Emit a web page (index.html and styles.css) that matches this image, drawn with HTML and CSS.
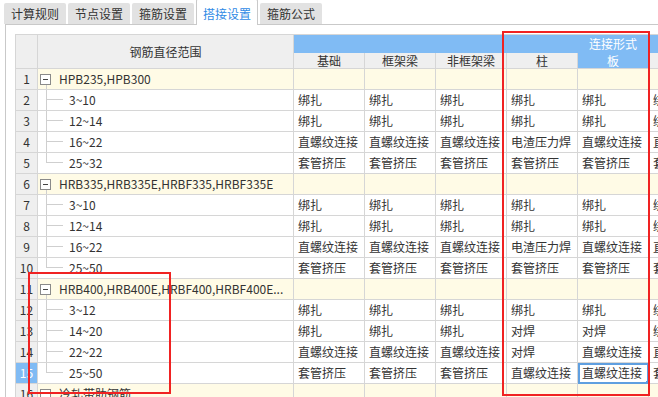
FILE: index.html
```html
<!DOCTYPE html>
<html lang="zh-CN">
  <head>
    <meta charset="UTF-8" />
    <title>搭接设置</title>
    <link rel="stylesheet" href="styles.css">
  </head>
  <body>
    <div class="tabs">
      <div class="tab">计算规则</div>
      <div class="tab">节点设置</div>
      <div class="tab">箍筋设置</div>
      <div class="tab active">搭接设置</div>
      <div class="tab">箍筋公式</div>
    </div>

    <div class="panel">
      <table class="grid">
        <colgroup>
          <col class="c-num" />
          <col class="c-range" />
          <col class="c-data" span="9" />
        </colgroup>
        <thead>
          <tr class="h1">
            <th rowspan="2" class="num"></th>
            <th rowspan="2">钢筋直径范围</th>
            <th colspan="9" class="group">连接形式</th>
          </tr>
          <tr class="h2">
            <th>基础</th>
            <th>框架梁</th>
            <th>非框架梁</th>
            <th>柱</th>
            <th class="sel">板</th>
            <th>墙水平筋</th>
            <th>墙垂直筋</th>
            <th>其它</th>
            <th>定尺长度</th>
          </tr>
        </thead>
        <tbody>
          <!-- HPB -->
          <tr class="grp">
            <td class="num">1</td>
            <td class="range"><div class="node top"><span class="toggle"><svg width="11" height="11" viewBox="0 0 11 11"><rect x="0.5" y="0.5" width="10" height="10" fill="#fff" stroke="#8a8a8a"/><path d="M3 5.5h5" stroke="#444"/></svg></span>HPB235,HPB300</div></td>
            <td></td><td></td><td></td><td></td><td></td><td></td><td></td><td></td><td></td>
          </tr>
          <tr>
            <td class="num">2</td>
            <td class="range"><div class="node"><span class="elbow"></span>3~10</div></td>
            <td>绑扎</td><td>绑扎</td><td>绑扎</td><td>绑扎</td><td>绑扎</td><td>绑扎</td><td>绑扎</td><td>绑扎</td><td>绑扎</td>
          </tr>
          <tr>
            <td class="num">3</td>
            <td class="range"><div class="node"><span class="elbow"></span>12~14</div></td>
            <td>绑扎</td><td>绑扎</td><td>绑扎</td><td>绑扎</td><td>绑扎</td><td>绑扎</td><td>绑扎</td><td>绑扎</td><td>绑扎</td>
          </tr>
          <tr>
            <td class="num">4</td>
            <td class="range"><div class="node"><span class="elbow"></span>16~22</div></td>
            <td>直螺纹连接</td><td>直螺纹连接</td><td>直螺纹连接</td><td>电渣压力焊</td><td>直螺纹连接</td><td>直螺纹连接</td><td>直螺纹连接</td><td>直螺纹连接</td><td>直螺纹连接</td>
          </tr>
          <tr>
            <td class="num">5</td>
            <td class="range"><div class="node"><span class="elbow last"></span>25~32</div></td>
            <td>套管挤压</td><td>套管挤压</td><td>套管挤压</td><td>套管挤压</td><td>套管挤压</td><td>套管挤压</td><td>套管挤压</td><td>套管挤压</td><td>套管挤压</td>
          </tr>

          <!-- HRB335 -->
          <tr class="grp">
            <td class="num">6</td>
            <td class="range"><div class="node top"><span class="toggle"><svg width="11" height="11" viewBox="0 0 11 11"><rect x="0.5" y="0.5" width="10" height="10" fill="#fff" stroke="#8a8a8a"/><path d="M3 5.5h5" stroke="#444"/></svg></span>HRB335,HRB335E,HRBF335,HRBF335E</div></td>
            <td></td><td></td><td></td><td></td><td></td><td></td><td></td><td></td><td></td>
          </tr>
          <tr>
            <td class="num">7</td>
            <td class="range"><div class="node"><span class="elbow"></span>3~10</div></td>
            <td>绑扎</td><td>绑扎</td><td>绑扎</td><td>绑扎</td><td>绑扎</td><td>绑扎</td><td>绑扎</td><td>绑扎</td><td>绑扎</td>
          </tr>
          <tr>
            <td class="num">8</td>
            <td class="range"><div class="node"><span class="elbow"></span>12~14</div></td>
            <td>绑扎</td><td>绑扎</td><td>绑扎</td><td>绑扎</td><td>绑扎</td><td>绑扎</td><td>绑扎</td><td>绑扎</td><td>绑扎</td>
          </tr>
          <tr>
            <td class="num">9</td>
            <td class="range"><div class="node"><span class="elbow"></span>16~22</div></td>
            <td>直螺纹连接</td><td>直螺纹连接</td><td>直螺纹连接</td><td>电渣压力焊</td><td>直螺纹连接</td><td>直螺纹连接</td><td>直螺纹连接</td><td>直螺纹连接</td><td>直螺纹连接</td>
          </tr>
          <tr>
            <td class="num">10</td>
            <td class="range"><div class="node"><span class="elbow last"></span>25~50</div></td>
            <td>套管挤压</td><td>套管挤压</td><td>套管挤压</td><td>套管挤压</td><td>套管挤压</td><td>套管挤压</td><td>套管挤压</td><td>套管挤压</td><td>套管挤压</td>
          </tr>

          <!-- HRB400 -->
          <tr class="grp">
            <td class="num">11</td>
            <td class="range"><div class="node top"><span class="toggle"><svg width="11" height="11" viewBox="0 0 11 11"><rect x="0.5" y="0.5" width="10" height="10" fill="#fff" stroke="#8a8a8a"/><path d="M3 5.5h5" stroke="#444"/></svg></span>HRB400,HRB400E,HRBF400,HRBF400E...</div></td>
            <td></td><td></td><td></td><td></td><td></td><td></td><td></td><td></td><td></td>
          </tr>
          <tr>
            <td class="num">12</td>
            <td class="range"><div class="node"><span class="elbow"></span>3~12</div></td>
            <td>绑扎</td><td>绑扎</td><td>绑扎</td><td>绑扎</td><td>绑扎</td><td>绑扎</td><td>绑扎</td><td>绑扎</td><td>绑扎</td>
          </tr>
          <tr>
            <td class="num">13</td>
            <td class="range"><div class="node"><span class="elbow"></span>14~20</div></td>
            <td>绑扎</td><td>绑扎</td><td>绑扎</td><td>对焊</td><td>对焊</td><td>绑扎</td><td>绑扎</td><td>绑扎</td><td>绑扎</td>
          </tr>
          <tr>
            <td class="num">14</td>
            <td class="range"><div class="node"><span class="elbow"></span>22~22</div></td>
            <td>直螺纹连接</td><td>直螺纹连接</td><td>直螺纹连接</td><td>对焊</td><td>直螺纹连接</td><td>直螺纹连接</td><td>直螺纹连接</td><td>直螺纹连接</td><td>直螺纹连接</td>
          </tr>
          <tr>
            <td class="num cur">15</td>
            <td class="range"><div class="node"><span class="elbow last"></span>25~50</div></td>
            <td>套管挤压</td><td>套管挤压</td><td>套管挤压</td><td>直螺纹连接</td><td class="cur-cell">直螺纹连接</td><td>套管挤压</td><td>套管挤压</td><td>套管挤压</td><td>套管挤压</td>
          </tr>

          <!-- 冷轧 -->
          <tr class="grp">
            <td class="num">16</td>
            <td class="range"><div class="node"><span class="toggle"><svg width="11" height="11" viewBox="0 0 11 11"><rect x="0.5" y="0.5" width="10" height="10" fill="#fff" stroke="#8a8a8a"/></svg></span>冷轧带肋钢筋</div></td>
            <td></td><td></td><td></td><td></td><td></td><td></td><td></td><td></td><td></td>
          </tr>
        </tbody>
      </table>
    </div>

    <!-- annotation boxes -->
    <div class="mark mark-cols"></div>
    <div class="mark mark-rows"></div>
  </body>
</html>
```

FILE: styles.css
```css
html,
body {
  margin: 0;
  height: 100%;
  overflow: hidden;
  background: #fff;
}
body {
  font-family: "Noto Sans CJK SC", "Microsoft YaHei", sans-serif;
  font-size: 12px;
  color: #333;
}

/* tabs */
.tabs {
  display: flex;
  align-items: flex-end;
  gap: 2px;
  height: 24px;
  padding-left: 4px;
}
.tab {
  height: 21px;
  line-height: 21px;
  padding: 0 7px;
  background: #e2e2e2;
  border-radius: 2px 2px 0 0;
  white-space: nowrap;
}
.tab.active {
  position: relative;
  z-index: 1;
  height: 22px;
  padding: 3px 6px 0;
  margin-bottom: -1px;
  background: #fff;
  color: #2f8ae5;
  border: 1px solid #c9c9c9;
  border-bottom: none;
}

.panel {
  margin-left: 5px;
  border-top: 1px solid #c9c9c9;
  border-left: 1px solid #c9c9c9;
  padding: 9px 0 0 9px;
  height: 100%;
}

/* grid */
.grid {
  border-collapse: collapse;
  table-layout: fixed;
  width: 917px;
  border: 1px solid #c8c8c8;
}
.c-num {
  width: 22px;
}
.c-range {
  width: 256px;
}
.c-data {
  width: 71px;
}
.grid th,
.grid td {
  border: 1px solid #d6d6d6;
  padding: 0 0 0 4px;
  white-space: nowrap;
  overflow: hidden;
  font-weight: normal;
  line-height: 20px;
}
.grid th {
  background: #efefef;
  text-align: center;
  padding: 0;
  line-height: 15px;
}
.grid tr.h1 {
  height: 18px;
}
.grid tr.h2 {
  height: 16px;
}
.grid th.group,
.grid th.sel {
  background: #80bbf4;
  color: #fff;
}
.grid th.group {
  border-bottom-color: #80bbf4;
}
.grid tbody tr {
  height: 21px;
}
.grid tr.grp td {
  background: #fffbe6;
}
.grid td.num,
.grid tr.grp td.num {
  background: #efefef;
  text-align: center;
  padding: 0;
}
.grid td.num.cur {
  background: #80bbf4;
  color: #fff;
}
.grid td.range {
  padding: 0 0 0 2px;
}
.grid td.cur-cell {
  position: relative;
  outline: 2px solid #5f9fe0;
  outline-offset: -2px;
}
.grid td.cur-cell::after {
  content: "";
  position: absolute;
  right: -2px;
  bottom: -2px;
  width: 4px;
  height: 4px;
  background: #5f9fe0;
}

/* tree */
.node {
  display: flex;
  align-items: center;
  height: 20px;
}
.node.top {
  background: linear-gradient(#cfcfcf, #cfcfcf) 6px 100% / 1px 50% no-repeat;
}
.toggle {
  display: flex;
  margin-right: 8px;
}
.elbow {
  align-self: stretch;
  width: 17px;
  margin: -1px 6px 0 6px;
  background:
    linear-gradient(#cfcfcf, #cfcfcf) left top / 1px 100% no-repeat,
    linear-gradient(#cfcfcf, #cfcfcf) left center / 100% 1px no-repeat;
}
.elbow.last {
  background-size: 1px 50%, 100% 1px;
}

/* annotation boxes */
.mark {
  position: absolute;
  border: 2px solid #f02222;
  box-sizing: border-box;
}
.mark-cols {
  left: 502px;
  top: 31px;
  width: 148px;
  height: 365px;
}
.mark-rows {
  left: 28px;
  top: 272px;
  width: 143px;
  height: 122px;
}
```
